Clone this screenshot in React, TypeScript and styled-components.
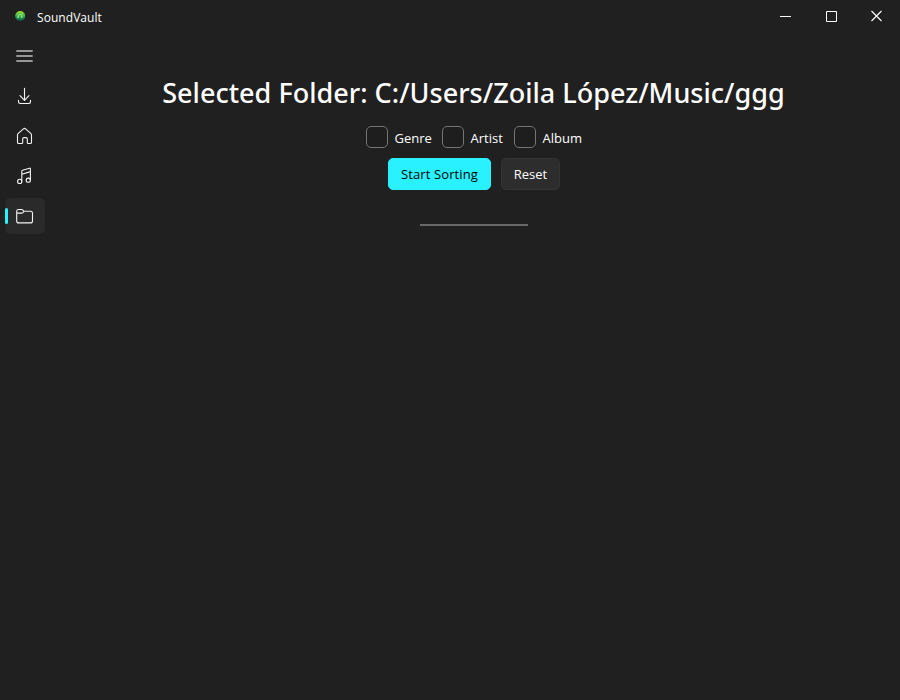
import React from 'react';
import styled, { createGlobalStyle } from 'styled-components';

const GlobalStyle = createGlobalStyle`
  * { box-sizing: border-box; }
  body {
    margin: 0;
    background: #202020;
    color: #fff;
    font-family: "Open Sans", "Noto Sans", sans-serif;
    font-size: 13px;
    overflow: hidden;
  }
  svg { display: block; }
`;

const Window = styled.div`
  width: 900px;
  height: 700px;
  display: flex;
  flex-direction: column;
  background: #202020;
`;

const TitleBar = styled.header`
  height: 32px;
  display: flex;
  align-items: center;
  padding-left: 14px;
`;

const AppName = styled.span`
  flex: 1;
  margin: 3px 0 0 11px;
  font-size: 12px;
  line-height: 18px;
  letter-spacing: 0.06px;
`;

const CaptionButton = styled.button`
  width: 46px;
  height: 32px;
  padding: 0;
  border: 0;
  background: transparent;
  color: #fff;
  display: grid;
  place-items: center;
`;

const Body = styled.div`
  flex: 1;
  display: flex;
`;

const Sidebar = styled.nav`
  width: 48px;
  padding: 6px 0 0 5px;
  display: flex;
  flex-direction: column;
  gap: 4px;
`;

const NavItem = styled.button<{ $active?: boolean; $muted?: boolean }>`
  width: 40px;
  height: 36px;
  padding: 0 0 0 10px;
  border: 0;
  border-radius: 5px;
  background: ${(p) => (p.$active ? '#2a2a2a' : 'transparent')};
  color: ${(p) => (p.$muted ? '#969696' : '#f4f4f4')};
  display: flex;
  align-items: center;
  position: relative;
`;

const ActiveMark = styled.span`
  position: absolute;
  left: 0;
  top: 10px;
  width: 3px;
  height: 16px;
  border-radius: 1.5px;
  background: #29f1ff;
`;

const Content = styled.main`
  flex: 1;
  display: flex;
  flex-direction: column;
  align-items: center;
  padding-top: 42px;
`;

const Heading = styled.h1`
  margin: 0 1px 0 0;
  height: 38px;
  font-family: "Noto Sans", sans-serif;
  font-size: 27px;
  font-weight: 500;
  line-height: 38px;
  white-space: nowrap;
  letter-spacing: 0.02px;
`;

const Options = styled.div`
  display: flex;
  gap: 10px;
  margin: 14px 0 0 1px;
`;

const Option = styled.label<{ $width: number }>`
  width: ${(p) => p.$width}px;
  height: 22px;
  display: flex;
  align-items: center;
  gap: 7px;
  line-height: 20px;
  white-space: nowrap;
`;

const OptionText = styled.span`
  margin-top: 2px;
`;

const CheckBox = styled.span`
  flex: none;
  width: 22px;
  height: 22px;
  border: 1px solid #757575;
  border-radius: 5px;
  background: #1e1e1e;
`;

const Actions = styled.div`
  display: flex;
  gap: 10px;
  margin-top: 10px;
`;

const ActionButton = styled.button<{ $primary?: boolean; $width: number }>`
  width: ${(p) => p.$width}px;
  height: 32px;
  padding: 0;
  border: 1px solid ${(p) => (p.$primary ? '#29f1ff' : '#343434')};
  border-radius: 5px;
  background: ${(p) => (p.$primary ? '#29f1ff' : '#2d2d2d')};
  color: ${(p) => (p.$primary ? '#000' : '#fff')};
  font: 13px/20px "Open Sans", "Noto Sans", sans-serif;
  letter-spacing: ${(p) => (p.$primary ? '0.1px' : '0')};
  white-space: nowrap;
`;

const ProgressTrack = styled.div`
  width: 108px;
  height: 2px;
  margin-top: 34px;
  background: #696969;
`;

const Logo = () => (
  <svg width="12" height="12" viewBox="0 0 12 12">
    <defs>
      <linearGradient id="disc" x1="0" y1="0" x2="0" y2="1">
        <stop offset="0" stopColor="#a3df2c" />
        <stop offset=".5" stopColor="#36b447" />
        <stop offset="1" stopColor="#09504c" />
      </linearGradient>
    </defs>
    <circle cx="6.2" cy="6" r="5" fill="url(#disc)" />
    <path d="M4.5 7.3V4.9L8 4.4v2.8" fill="none" stroke="#a5ecaa" strokeWidth=".8" />
    <circle cx="4" cy="7.3" r=".8" fill="#a5ecaa" />
    <circle cx="7.5" cy="7.1" r=".8" fill="#a5ecaa" />
  </svg>
);

const Glyph = ({ children }: { children: React.ReactNode }) => (
  <svg width="20" height="20" viewBox="0 0 20 20" fill="none" stroke="currentColor" strokeWidth="1.1" strokeLinecap="round" strokeLinejoin="round">
    {children}
  </svg>
);

export default function App() {
  return (
    <>
      <GlobalStyle />
      <Window>
        <TitleBar>
          <Logo />
          <AppName>SoundVault</AppName>
          <CaptionButton aria-label="Minimize">
            <svg width="12" height="12" stroke="currentColor"><path d="M1 6.5h11" /></svg>
          </CaptionButton>
          <CaptionButton aria-label="Maximize">
            <svg width="12" height="12" fill="none" stroke="currentColor"><path d="M1.5 1.5h10v10h-10z" /></svg>
          </CaptionButton>
          <CaptionButton aria-label="Close">
            <svg width="12" height="12" stroke="currentColor" strokeWidth="1.1"><path d="m.5 1 10 10M10.5 1 .5 11" /></svg>
          </CaptionButton>
        </TitleBar>
        <Body>
          <Sidebar>
            <NavItem $muted aria-label="Menu">
              <Glyph><path d="M1.3 5h16.4M1.3 10h16.4M1.3 15h16.4" strokeWidth="1.8" strokeLinecap="butt" /></Glyph>
            </NavItem>
            <NavItem aria-label="Download">
              <Glyph><path d="M9.5 2.2v12M5 9.7l4.5 4.6L14 9.7M3.5 14.2v1.6q0 1.7 1.7 1.7h8.6q1.7 0 1.7-1.7v-1.6" /></Glyph>
            </NavItem>
            <NavItem aria-label="Home">
              <Glyph><path d="M2.5 9q0-1 .8-1.7l5.1-4.5q1.1-1 2.2 0l5.1 4.5q.8.7.8 1.7v7.2q0 1.3-1.3 1.3h-1.9q-1 0-1-1v-3.7q0-1.2-1.2-1.2H8.9q-1.2 0-1.2 1.2v3.7q0 1-1 1H3.8q-1.3 0-1.3-1.3Z" /></Glyph>
            </NavItem>
            <NavItem aria-label="Music">
              <Glyph>
                <path d="M6.8 15V5.1q0-.7.7-.9l7.1-2q.8-.2.8.6v10.9M6.8 8.2l8.6-2.6" />
                <circle cx="4.7" cy="15.4" r="2.1" />
                <circle cx="13.3" cy="14.2" r="2.1" />
              </Glyph>
            </NavItem>
            <NavItem $active aria-label="Folders">
              <ActiveMark />
              <Glyph><path d="M1.7 5.4q0-1.9 1.9-1.9h3q.7 0 1.2.5l1.2 1.3h6.5q2 0 2 2v7.6q0 2-2 2H3.7q-2 0-2-2ZM1.7 7.1h5q.7 0 1.2-.5L9 5.3" /></Glyph>
            </NavItem>
          </Sidebar>
          <Content>
            <Heading>Selected Folder: C:/Users/Zoila López/Music/ggg</Heading>
            <Options>
              <Option $width={66}><CheckBox /><OptionText>Genre</OptionText></Option>
              <Option $width={62}><CheckBox /><OptionText>Artist</OptionText></Option>
              <Option $width={70}><CheckBox /><OptionText>Album</OptionText></Option>
            </Options>
            <Actions>
              <ActionButton $primary $width={103}>Start Sorting</ActionButton>
              <ActionButton $width={59}>Reset</ActionButton>
            </Actions>
            <ProgressTrack />
          </Content>
        </Body>
      </Window>
    </>
  );
}
